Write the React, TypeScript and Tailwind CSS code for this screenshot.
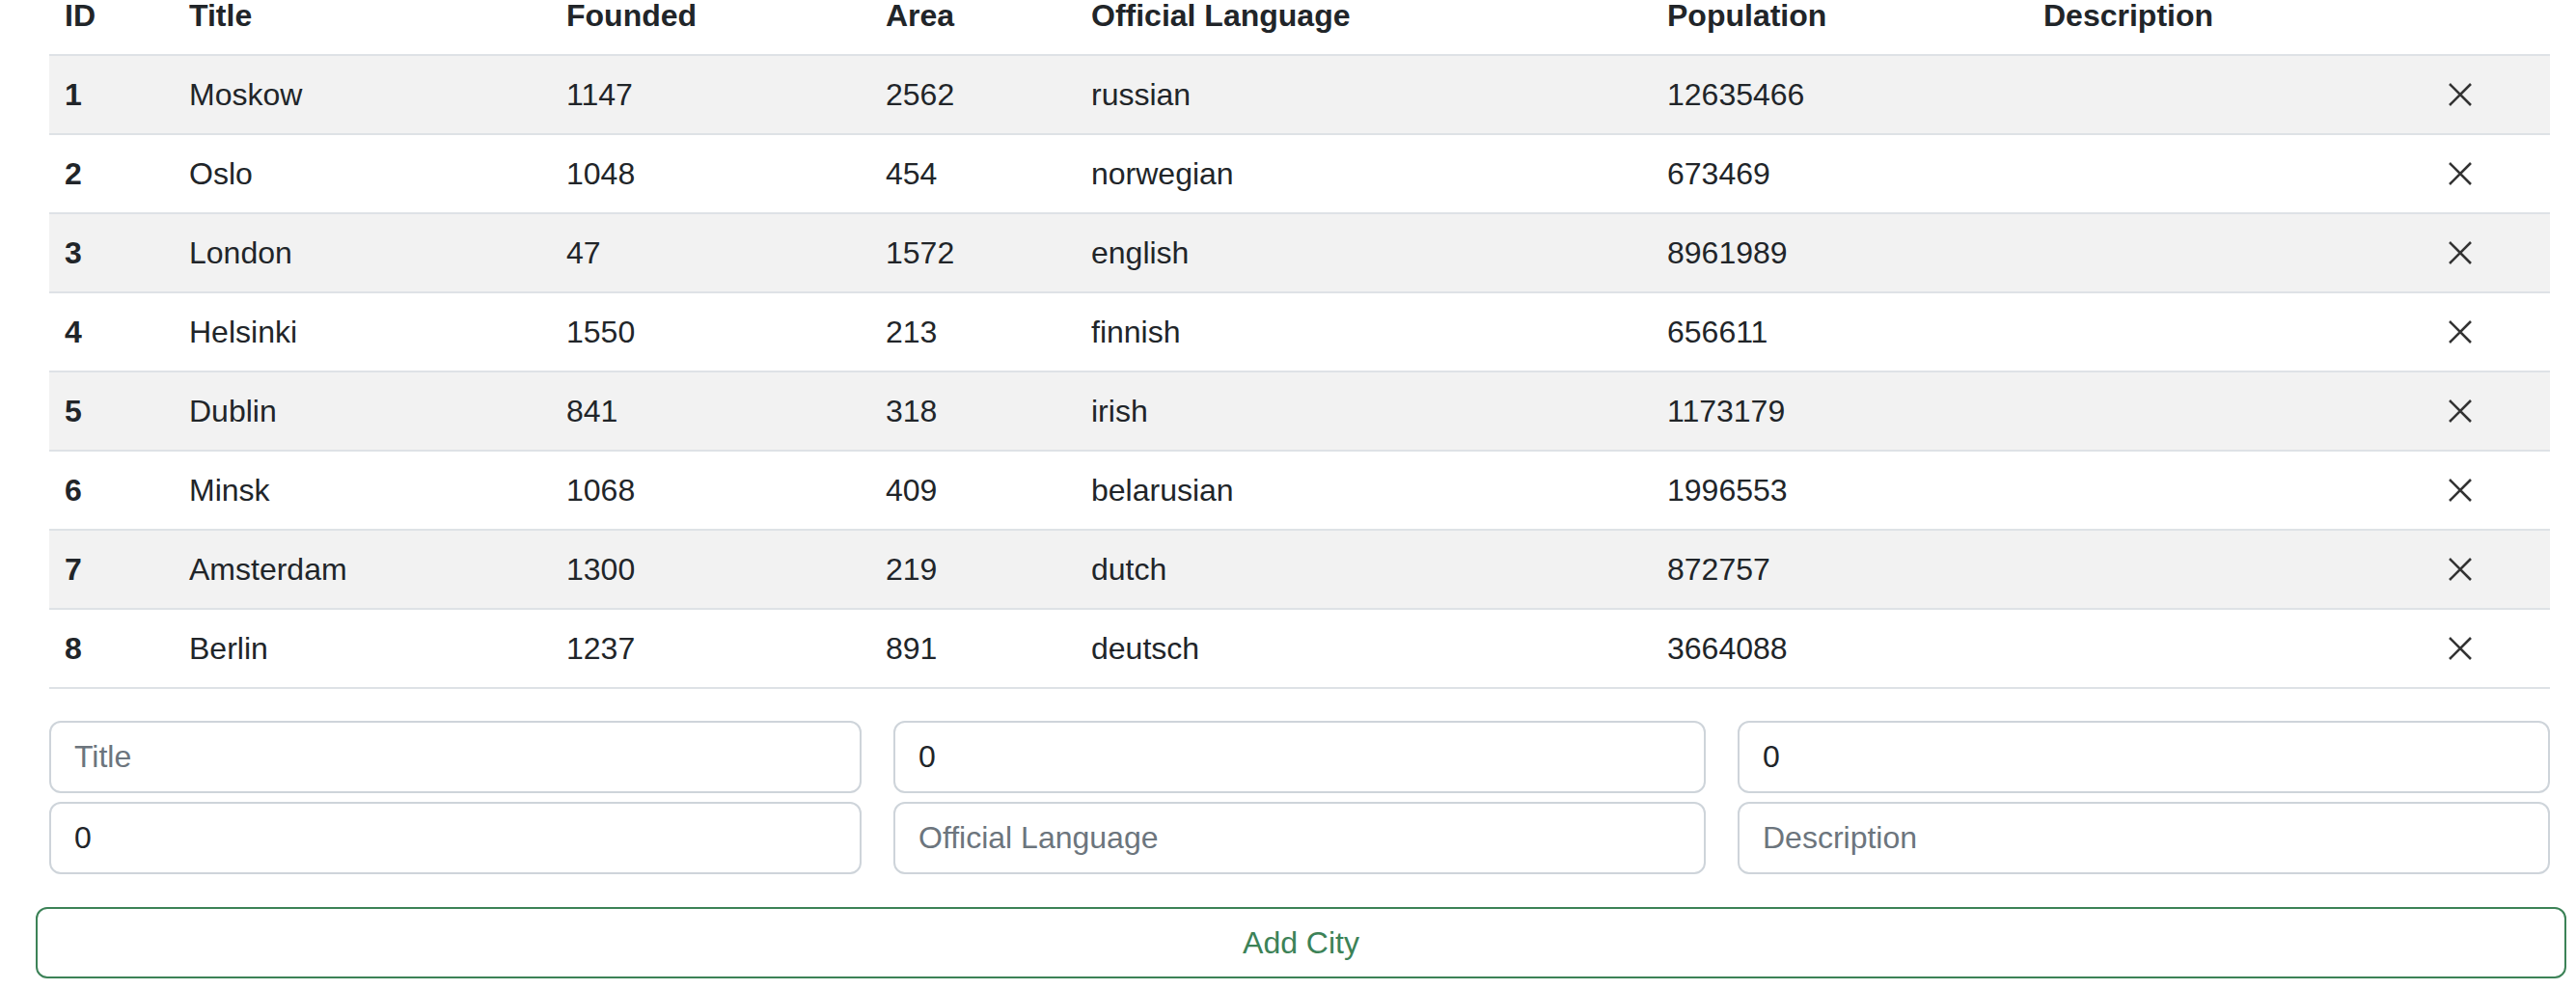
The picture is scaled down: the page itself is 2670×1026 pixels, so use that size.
import React from "react";

const cities = [
  [1, "Moskow", 1147, 2562, "russian", 12635466],
  [2, "Oslo", 1048, 454, "norwegian", 673469],
  [3, "London", 47, 1572, "english", 8961989],
  [4, "Helsinki", 1550, 213, "finnish", 656611],
  [5, "Dublin", 841, 318, "irish", 1173179],
  [6, "Minsk", 1068, 409, "belarusian", 1996553],
  [7, "Amsterdam", 1300, 219, "dutch", 872757],
  [8, "Berlin", 1237, 891, "deutsch", 3664088],
] as const;

function XIcon() {
  return (
    <svg width="24" height="24" viewBox="0 0 24 24" className="block">
      <path d="M1 1 L23 23 M23 1 L1 23" stroke="#333" strokeWidth="2.6" fill="none" />
    </svg>
  );
}

export default function App() {
  const font = { fontFamily: '"Liberation Sans", Arial, sans-serif' };
  const cell = "px-[16px] py-[16px] leading-[48px] align-middle";
  return (
    <div className="bg-white text-[#212529] text-[32px] pl-[37px] pr-[10px]" style={font}>
      <div className="ml-[14px] mr-[17px] -mt-[24px]">
        <table className="w-full table-fixed border-collapse text-left">
          <colgroup>
            <col className="w-[129px]" />
            <col className="w-[391px]" />
            <col className="w-[331px]" />
            <col className="w-[213px]" />
            <col className="w-[597px]" />
            <col className="w-[390px]" />
            <col className="w-[420px]" />
            <col />
          </colgroup>
          <thead>
            <tr className="border-b-2 border-[#dee2e6]">
              <th className={`${cell} font-bold`}>ID</th>
              <th className={`${cell} font-bold`}>Title</th>
              <th className={`${cell} font-bold`}>Founded</th>
              <th className={`${cell} font-bold`}>Area</th>
              <th className={`${cell} font-bold`}>Official Language</th>
              <th className={`${cell} font-bold`}>Population</th>
              <th className={`${cell} font-bold`}>Description</th>
              <th className={cell}></th>
            </tr>
          </thead>
          <tbody>
            {cities.map((c, i) => (
              <tr
                key={c[0]}
                className={`border-b-2 border-[#dee2e6] ${i % 2 === 0 ? "bg-[#f2f2f2]" : "bg-white"}`}
              >
                <td className={`${cell} font-bold`}>{c[0]}</td>
                <td className={cell}>{c[1]}</td>
                <td className={cell}>{c[2]}</td>
                <td className={cell}>{c[3]}</td>
                <td className={cell}>{c[4]}</td>
                <td className={cell}>{c[5]}</td>
                <td className={cell}></td>
                <td className={cell}>
                  <XIcon />
                </td>
              </tr>
            ))}
          </tbody>
        </table>

        <div className="mt-[33px] grid grid-cols-3 gap-x-[33px] gap-y-[9px]">
          <input
            placeholder="Title"
            className="h-[75px] rounded-[12px] border-2 border-[#ced4da] px-[24px] text-[32px] text-[#212529] placeholder:text-[#6c757d] outline-none"
            style={font}
          />
          <input
            defaultValue="0"
            className="h-[75px] rounded-[12px] border-2 border-[#ced4da] px-[24px] text-[32px] text-[#212529] outline-none"
            style={font}
          />
          <input
            defaultValue="0"
            className="h-[75px] rounded-[12px] border-2 border-[#ced4da] px-[24px] text-[32px] text-[#212529] outline-none"
            style={font}
          />
          <input
            defaultValue="0"
            className="h-[75px] rounded-[12px] border-2 border-[#ced4da] px-[24px] text-[32px] text-[#212529] outline-none"
            style={font}
          />
          <input
            placeholder="Official Language"
            className="h-[75px] rounded-[12px] border-2 border-[#ced4da] px-[24px] text-[32px] text-[#212529] placeholder:text-[#6c757d] outline-none"
            style={font}
          />
          <input
            placeholder="Description"
            className="h-[75px] rounded-[12px] border-2 border-[#ced4da] px-[24px] text-[32px] text-[#212529] placeholder:text-[#6c757d] outline-none"
            style={font}
          />
        </div>
      </div>

      <button
        className="mt-[34px] mb-[12px] w-full h-[74px] rounded-[12px] border-2 border-[#3c8257] bg-white text-[32px] text-[#3c8257]"
        style={font}
      >
        Add City
      </button>
    </div>
  );
}
